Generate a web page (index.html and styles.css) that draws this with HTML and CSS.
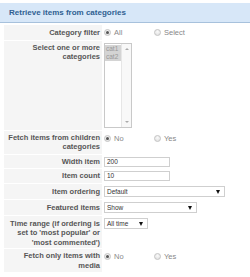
FILE: index.html
```html
<!DOCTYPE html>
<html>
<head>
<meta charset="utf-8">
<link rel="stylesheet" href="styles.css">
</head>
<body>
<div class="panel">
  <div class="head">Retrieve items from categories</div>
  <div class="rows">
    <div class="row r1">
      <div class="lab">Category filter</div>
      <div class="val">
        <span class="opt"><span class="radio on"></span>All</span>
        <span class="opt"><span class="radio"></span>Select</span>
      </div>
    </div>
    <div class="row r2">
      <div class="lab">Select one or more categories</div>
      <div class="val">
        <div class="listbox">
          <div class="items"><div class="it">cat1</div><div class="it">cat2</div></div>
          <div class="sb"><span class="up"></span><span class="dn"></span></div>
        </div>
      </div>
    </div>
    <div class="row r3">
      <div class="lab">Fetch items from children categories</div>
      <div class="val">
        <span class="opt"><span class="radio on"></span>No</span>
        <span class="opt"><span class="radio"></span>Yes</span>
      </div>
    </div>
    <div class="row">
      <div class="lab">Width item</div>
      <div class="val"><div class="inp">200</div></div>
    </div>
    <div class="row">
      <div class="lab">Item count</div>
      <div class="val"><div class="inp">10</div></div>
    </div>
    <div class="row rs">
      <div class="lab">Item ordering</div>
      <div class="val"><div class="sel w121">Default<span class="arr"></span></div></div>
    </div>
    <div class="row rs">
      <div class="lab">Featured items</div>
      <div class="val"><div class="sel w93">Show<span class="arr"></span></div></div>
    </div>
    <div class="row r8">
      <div class="lab">Time range (if ordering is set to 'most popular' or 'most commented')</div>
      <div class="val"><div class="sel w44">All time<span class="arr"></span></div></div>
    </div>
    <div class="row r3">
      <div class="lab">Fetch only items with media</div>
      <div class="val">
        <span class="opt"><span class="radio on"></span>No</span>
        <span class="opt"><span class="radio"></span>Yes</span>
      </div>
    </div>
  </div>
</div>
</body>
</html>
```
FILE: styles.css
```css
html, body { margin: 0; padding: 0; background: #fff; }
body { font-family: "Liberation Sans", Arial, sans-serif; }
.panel { width: 250px; padding-top: 3px; }
.head {
  height: 19px;
  line-height: 20px;
  background: #d7e7f8;
  border-bottom: 1px solid #a7c1dc;
  color: #2f5f92;
  font-size: 8px;
  font-weight: bold;
  padding-left: 9px;
}
.rows { padding: 2px 0 0 4px; display: flex; flex-direction: column; gap: 1px; }
.row { display: grid; grid-template-columns: 98px 1fr; }
.lab {
  background: #f5f5f5;
  color: #555;
  font-size: 7.5px;
  font-weight: bold;
  line-height: 9.5px;
  text-align: right;
  padding: 2px 2px 2px 4px;
}
.val {
  display: flex;
  align-items: flex-start;
  padding: 2px 0 0 2px;
  font-size: 7.5px;
  color: #888;
}
.r1 .lab { padding-top: 3px; padding-bottom: 2px; }
.r1 .val, .r3 .val { padding-top: 3px; }
.r2 .lab { height: 85px; }
.r2 .val { padding-top: 2px; }
.r3 .lab { padding-top: 2px; padding-bottom: 2px; }
.rs .lab { padding-top: 3px; padding-bottom: 2px; }
.rs .val { padding-bottom: 2px; }
.r8 .lab { padding-top: 3px; padding-bottom: 1px; }
.opt { display: inline-flex; align-items: center; width: 50px; gap: 3px; line-height: 9px; }
.radio {
  width: 7px; height: 7px; border-radius: 50%;
  box-sizing: border-box;
  border: 1px solid #c4c4c4;
  background: radial-gradient(circle at 50% 35%, #fafafa, #dcdcdc);
  display: inline-flex; align-items: center; justify-content: center;
}
.radio.on::after { content: ""; width: 3px; height: 3px; border-radius: 50%; background: #555; }
.listbox {
  width: 28px; height: 85px; box-sizing: border-box;
  border: 1px solid #c9c9c9; display: flex; background: #fff;
}
.items { flex: 1; padding-top: 1px; }
.it { background: #d4d4d4; color: #999; font-size: 6.5px; line-height: 8px; padding-left: 1px; width: 15px; }
.sb { width: 9px; border-left: 1px solid #e6e6e6; background: #f8f8f8; position: relative; }
.up, .dn { position: absolute; left: 3px; width: 0; height: 0; border-left: 2px solid transparent; border-right: 2px solid transparent; }
.up { top: 4px; border-bottom: 2px solid #aaa; }
.dn { bottom: 4px; border-top: 2px solid #aaa; }
.inp {
  width: 66px; height: 10px; box-sizing: border-box;
  border: 1px solid #cfcfcf; color: #333; font-size: 6.5px; line-height: 8px; padding-left: 2px;
}
.sel {
  position: relative; height: 11px; box-sizing: border-box;
  border: 1px solid #cfcfcf; color: #333; font-size: 6.5px; line-height: 9px; padding-left: 2px; background: #fff;
}
.w121 { width: 121px; }
.w93 { width: 93px; }
.w44 { width: 44px; }
.arr { position: absolute; right: 4px; top: 3px; width: 0; height: 0; border-left: 2px solid transparent; border-right: 2px solid transparent; border-top: 4px solid #111; }
```
